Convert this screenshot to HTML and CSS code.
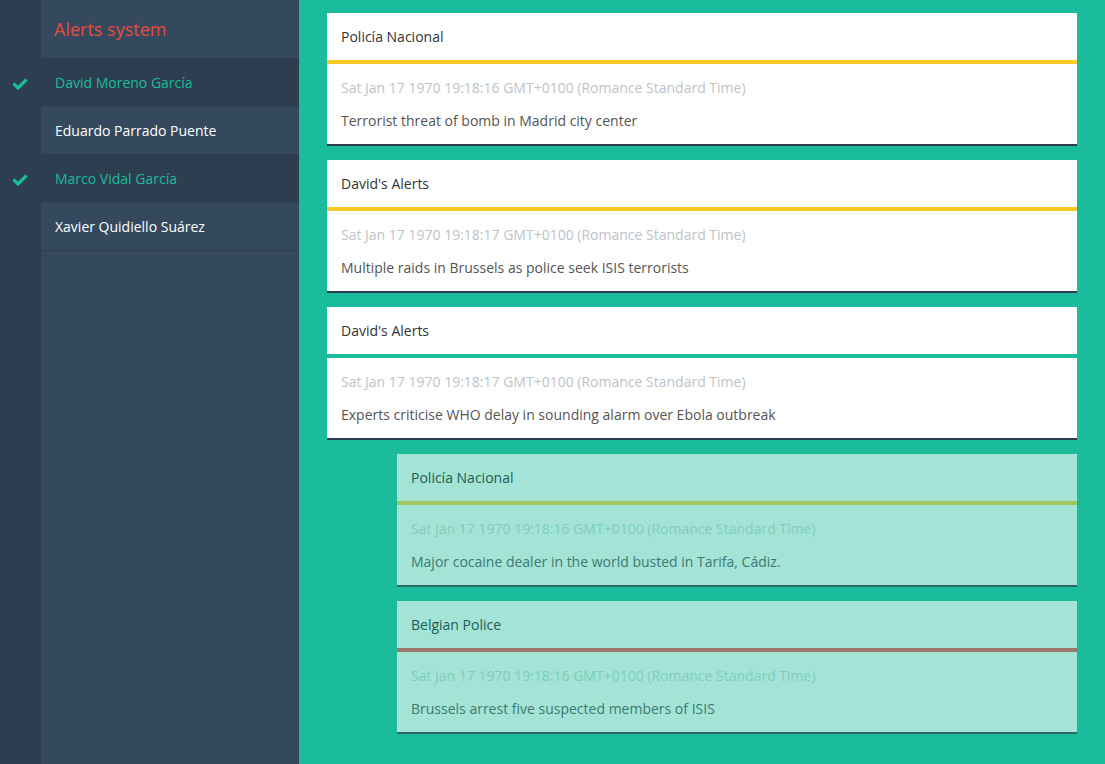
FILE: index.html
```html
<!DOCTYPE html>
<html lang="en">
<head>
<meta charset="utf-8">
<title>Alerts system</title>
<link rel="stylesheet" href="styles.css">
</head>
<body>
<div class="app">
  <aside class="sidebar">
    <div class="brand"><span class="brand-text">Alerts system</span></div>
    <ul class="users">
      <li class="user selected">
        <span class="check"><svg width="16" height="12" viewBox="0 0 16 12"><polyline points="1.5,5.5 6,10 14.5,1.5" fill="none" stroke="#1abc9c" stroke-width="3.2"/></svg></span>
        <span class="name">David Moreno García</span>
      </li>
      <li class="user">
        <span class="check"></span>
        <span class="name">Eduardo Parrado Puente</span>
      </li>
      <li class="user selected">
        <span class="check"><svg width="16" height="12" viewBox="0 0 16 12"><polyline points="1.5,5.5 6,10 14.5,1.5" fill="none" stroke="#1abc9c" stroke-width="3.2"/></svg></span>
        <span class="name">Marco Vidal García</span>
      </li>
      <li class="user">
        <span class="check"></span>
        <span class="name">Xavier Quidiello Suárez</span>
      </li>
    </ul>
    <div class="filler"></div>
  </aside>
  <main class="feed">
    <article class="card line-yellow">
      <header class="card-head">Policía Nacional</header>
      <div class="card-body">
        <div class="date">Sat Jan 17 1970 19:18:16 GMT+0100 (Romance Standard Time)</div>
        <div class="msg">Terrorist threat of bomb in Madrid city center</div>
      </div>
    </article>
    <article class="card line-yellow">
      <header class="card-head">David's Alerts</header>
      <div class="card-body">
        <div class="date">Sat Jan 17 1970 19:18:17 GMT+0100 (Romance Standard Time)</div>
        <div class="msg">Multiple raids in Brussels as police seek ISIS terrorists</div>
      </div>
    </article>
    <article class="card line-teal">
      <header class="card-head">David's Alerts</header>
      <div class="card-body">
        <div class="date">Sat Jan 17 1970 19:18:17 GMT+0100 (Romance Standard Time)</div>
        <div class="msg">Experts criticise WHO delay in sounding alarm over Ebola outbreak</div>
      </div>
    </article>
    <article class="card light line-green">
      <header class="card-head">Policía Nacional</header>
      <div class="card-body">
        <div class="date">Sat Jan 17 1970 19:18:16 GMT+0100 (Romance Standard Time)</div>
        <div class="msg">Major cocaine dealer in the world busted in Tarifa, Cádiz.</div>
      </div>
    </article>
    <article class="card light line-brown">
      <header class="card-head">Belgian Police</header>
      <div class="card-body">
        <div class="date">Sat Jan 17 1970 19:18:16 GMT+0100 (Romance Standard Time)</div>
        <div class="msg">Brussels arrest five suspected members of ISIS</div>
      </div>
    </article>
  </main>
</div>
</body>
</html>
```
FILE: styles.css
```css
* { box-sizing: border-box; }
html, body { margin: 0; padding: 0; height: 100%; }
body {
  font-family: "Open Sans", "DejaVu Sans", sans-serif;
  font-size: 14px;
  background: #1abc9c;
  overflow: hidden;
}
.app {
  display: flex;
  height: 764px;
}
.sidebar {
  width: 299px;
  flex: 0 0 299px;
  display: flex;
  flex-direction: column;
  background: #2c3e50;
}
.brand {
  height: 59px;
  margin-left: 41px;
  background: #34495e;
  border-bottom: 1px solid #2c3e50;
  display: flex;
  align-items: center;
  padding-left: 13px;
}
.brand-text {
  color: #e74c3c;
  font-size: 18px;
  line-height: 24px;
}
.users {
  list-style: none;
  margin: 0;
  padding: 0;
}
.user {
  display: flex;
  height: 48px;
}
.check {
  width: 41px;
  flex: 0 0 41px;
  display: flex;
  align-items: center;
  padding-left: 12px;
  padding-top: 1px;
}
.name {
  flex: 1;
  display: flex;
  align-items: center;
  padding-left: 14px;
  background: #34495e;
  border-bottom: 1px solid #2c3e50;
  color: #ffffff;
  line-height: 20px;
}
.user.selected .name {
  background: #2c3e50;
  color: #1abc9c;
}
.filler {
  flex: 1;
  margin-left: 41px;
  background: #34495e;
}
.feed {
  flex: 1;
  padding: 13px 28px 0 28px;
  display: flex;
  flex-direction: column;
  gap: 14px;
}
.card {
  background: #ffffff;
  border-bottom: 2px solid #2c3e50;
}
.card.light {
  margin-left: 70px;
  background: #a3e4d7;
  border-bottom-color: #2a6a64;
}
.card-head {
  height: 51px;
  padding: 14px 14px 0 14px;
  line-height: 20px;
  color: #333333;
  border-bottom: 4px solid #fcc92a;
}
.line-teal .card-head { border-bottom-color: #1abc9c; }
.line-green .card-head { border-bottom-color: #a2c45a; }
.line-brown .card-head { border-bottom-color: #9b7a6d; }
.card-body {
  height: 80px;
  padding: 14px 14px 0 14px;
}
.date {
  line-height: 20px;
  color: #bdc3c7;
}
.msg {
  margin-top: 13px;
  line-height: 20px;
  color: #555555;
}
.light .card-head { color: #215d54; }
.light .date { color: #7fcdbd; }
.light .msg { color: #3d7a70; }
```
